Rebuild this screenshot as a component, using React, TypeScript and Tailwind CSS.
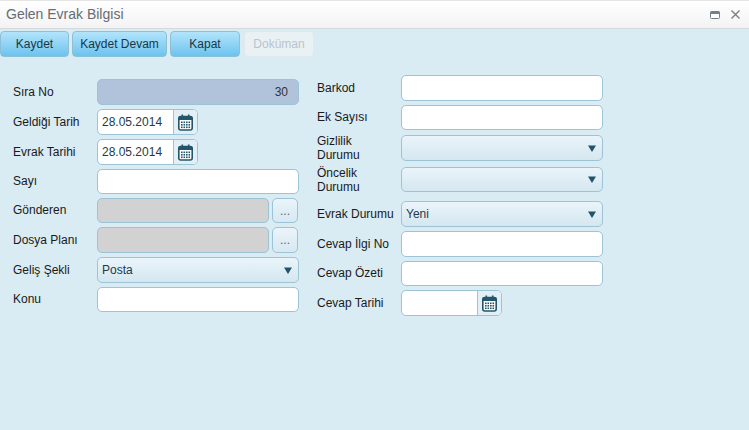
import React from "react";

const inputBase = "h-full rounded-[5px] border border-[#9cc4d6] box-border";

function Calendar() {
  return (
    <svg width="15" height="17" viewBox="0 0 15 17" className="block">
      <rect x="0.8" y="2.5" width="13.4" height="13.5" rx="2" fill="#fff" stroke="#24566b" strokeWidth="1.6" />
      <rect x="0.8" y="2.5" width="13.4" height="3.5" fill="#24566b" />
      <rect x="3.5" y="0.5" width="1.6" height="3" fill="#24566b" />
      <rect x="9.9" y="0.5" width="1.6" height="3" fill="#24566b" />
      {[7.5, 10, 12.5].map((y) =>
        [3, 5.5, 8, 10.5].map((x) => (
          <rect key={`${x}-${y}`} x={x} y={y} width="1.6" height="1.6" fill="#24566b" />
        ))
      )}
    </svg>
  );
}

function Arrow() {
  return (
    <svg width="8" height="7" viewBox="0 0 8 7" className="block">
      <path d="M0 0.5H8L4 7Z" fill="#1f5568" />
    </svg>
  );
}

function Row({ label, h, mt, children, two }: { label: React.ReactNode; h: number; mt: string; children?: React.ReactNode; two?: boolean }) {
  return (
    <div className={`flex items-center ${mt}`} style={{ height: h }}>
      <div className={`shrink-0 w-[84px] text-[12px] text-[#1a1a1a] leading-[14px] ${two ? "" : "-mt-[1px]"}`}>{label}</div>
      <div className="flex-1 h-full flex">{children}</div>
    </div>
  );
}

function TextBox() {
  return <div className={`${inputBase} w-full bg-white`} />;
}

function DateBox({ value }: { value?: string }) {
  return (
    <div className={`${inputBase} w-[101px] flex bg-white overflow-hidden`}>
      <div className="w-[76px] border-r border-[#9cc4d6] pl-1 text-[12px] leading-[24px] text-[#1f3a48]">{value}</div>
      <div className="flex-1 bg-[#e3eff6] flex items-center justify-center">
        <Calendar />
      </div>
    </div>
  );
}

function SelectBox({ value }: { value?: string }) {
  return (
    <div className={`${inputBase} w-full flex items-center justify-between pl-1 pr-[6px] bg-gradient-to-b from-[#eaf4fa] to-[#d5e7f0] text-[12px] text-[#1f3a48]`}>
      <span>{value}</span>
      <Arrow />
    </div>
  );
}

function LookupBox() {
  return (
    <div className="flex w-full h-full gap-[3px]">
      <div className={`${inputBase} w-[172px] bg-[#d2d2d2]`} />
      <div className={`${inputBase} w-[26px] bg-gradient-to-b from-[#eaf4fa] to-[#d8e8f1] flex items-center justify-center text-[12px] text-[#4b6a7a]`}>...</div>
    </div>
  );
}

function Btn({ children, w, disabled }: { children: string; w: string; disabled?: boolean }) {
  return (
    <div
      className={`${w} h-[26px] rounded-[4px] border flex items-center justify-center text-[12px] ${
        disabled
          ? "ml-[1px] border-[#dfe8ed] bg-[#e9f1f5] text-[#b9c4cc]"
          : "border-[#8cc0d8] bg-gradient-to-b from-[#b2e4fb] to-[#6cc3ee] text-[#17384a]"
      }`}
    >
      {children}
    </div>
  );
}

export default function App() {
  return (
    <div className="w-[749px] h-[430px] bg-[#d9ebf3] overflow-hidden" style={{ fontFamily: '"Liberation Sans", Arial, sans-serif' }}>
      <div className="h-[29px] border-b border-[#d3d9dc] border-t-[#e4e4e4] border-t bg-gradient-to-b from-white to-[#f3f3f3] flex items-center justify-between pl-[6px] pr-[9px]">
        <span className="text-[14px] text-[#666d72]">Gelen Evrak Bilgisi</span>
        <div className="flex items-center gap-[11px]">
          <svg width="10" height="8" viewBox="0 0 10 8" className="block">
            <rect x="0.5" y="0.5" width="9" height="7" rx="1" fill="#fff" stroke="#75808a" />
            <rect x="0.5" y="0.5" width="9" height="2.5" fill="#75808a" />
          </svg>
          <svg width="9" height="9" viewBox="0 0 9 9" className="block">
            <path d="M0.5 0.5L8.5 8.5M8.5 0.5L0.5 8.5" stroke="#75808a" strokeWidth="1.4" />
          </svg>
        </div>
      </div>
      <div className="flex gap-[3px] mt-[2px]">
        <Btn w="w-[69px]">Kaydet</Btn>
        <Btn w="w-[95px]">Kaydet Devam</Btn>
        <Btn w="w-[70px]">Kapat</Btn>
        <Btn w="w-[70px]" disabled>Doküman</Btn>
      </div>
      <div className="flex pl-[13px]">
        <div className="w-[286px] pt-[22px]">
          <Row label="Sıra No" h={26} mt="mt-0">
            <div className={`${inputBase} w-full bg-[#b0c3da] text-right pr-[10px] text-[12px] leading-[24px] text-[#333]`}>30</div>
          </Row>
          <Row label="Geldiği Tarih" h={26} mt="mt-[4px]"><DateBox value="28.05.2014" /></Row>
          <Row label="Evrak Tarihi" h={26} mt="mt-[4px]"><DateBox value="28.05.2014" /></Row>
          <Row label="Sayı" h={25} mt="mt-[4px]"><TextBox /></Row>
          <Row label="Gönderen" h={25} mt="mt-[4px]"><LookupBox /></Row>
          <Row label="Dosya Planı" h={26} mt="mt-[4px]"><LookupBox /></Row>
          <Row label="Geliş Şekli" h={26} mt="mt-[4px]"><SelectBox value="Posta" /></Row>
          <Row label="Konu" h={25} mt="mt-[4px]"><TextBox /></Row>
        </div>
        <div className="w-[286px] ml-[18px] pt-[18px]">
          <Row label="Barkod" h={26} mt="mt-0"><TextBox /></Row>
          <Row label="Ek Sayısı" h={25} mt="mt-[4px]"><TextBox /></Row>
          <Row label={<>Gizlilik<br />Durumu</>} h={26} mt="mt-[5px]" two><SelectBox /></Row>
          <Row label={<>Öncelik<br />Durumu</>} h={25} mt="mt-[6px]" two><SelectBox /></Row>
          <Row label="Evrak Durumu" h={26} mt="mt-[9px]"><SelectBox value="Yeni" /></Row>
          <Row label="Cevap İlgi No" h={26} mt="mt-[4px]"><TextBox /></Row>
          <Row label="Cevap Özeti" h={25} mt="mt-[4px]"><TextBox /></Row>
          <Row label="Cevap Tarihi" h={26} mt="mt-[4px]"><DateBox /></Row>
        </div>
      </div>
    </div>
  );
}
